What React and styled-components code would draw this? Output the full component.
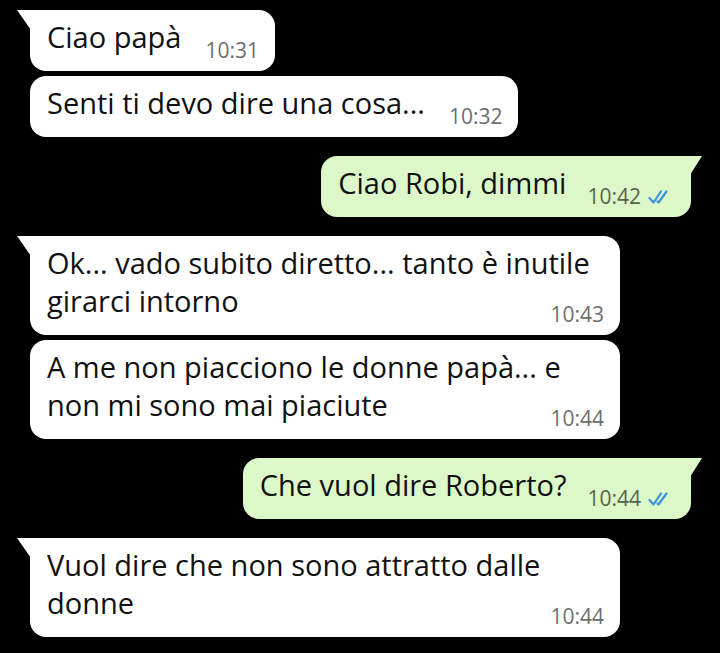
import React from "react";
import styled, { createGlobalStyle, css } from "styled-components";

const GlobalStyle = createGlobalStyle`
  html, body {
    margin: 0;
    padding: 0;
    background: #000;
  }
  body {
    font-family: "Open Sans", "Liberation Sans", Arial, sans-serif;
    -webkit-font-smoothing: antialiased;
  }
`;

const Chat = styled.div`
  display: flex;
  flex-direction: column;
  box-sizing: border-box;
  min-height: 653px;
  padding: 10px 29px 16px 30px;
  background: #000;
`;

const Bubble = styled.div`
  position: relative;
  display: flow-root;
  box-sizing: border-box;
  align-self: ${(p) => (p.$out ? "flex-end" : "flex-start")};
  width: ${(p) => (p.$wide ? "590px" : "auto")};
  margin-top: ${(p) => (p.$tail ? "19px" : "5px")};
  padding: 8px ${(p) => (p.$out ? "18px" : "16px")} 10px 17px;
  background: ${(p) => (p.$out ? "#dcf8c9" : "#ffffff")};
  border-radius: 16px;
  color: #111;
  font-size: 29px;
  line-height: 38px;
  letter-spacing: 0;

  &:first-child {
    margin-top: 0;
  }

  ${(p) =>
    p.$tail &&
    (p.$out
      ? css`
          border-top-right-radius: 0;
          &::before {
            content: "";
            position: absolute;
            top: 0;
            right: -11px;
            width: 12px;
            height: 19px;
            background: #dcf8c9;
            clip-path: polygon(0 0, 100% 0, 0 100%);
          }
        `
      : css`
          border-top-left-radius: 0;
          &::before {
            content: "";
            position: absolute;
            top: 0;
            left: -13px;
            width: 14px;
            height: 20px;
            background: #ffffff;
            clip-path: polygon(0 0, 100% 0, 100% 100%);
          }
        `)}
`;

const Text = styled.span`
  white-space: normal;
`;

const Meta = styled.span`
  float: right;
  display: inline-flex;
  align-items: center;
  gap: 7px;
  margin: 22px 0 0 ${(p) => (p.$out ? "21px" : "24px")};
  font-size: 21px;
  line-height: 21px;
  color: ${(p) => (p.$out ? "#56634f" : "#6e6e6e")};
`;

const Ticks = () => (
  <svg width="25" height="14" viewBox="0 0 25 14" fill="none">
    <path
      d="M1.5 8 L5.5 12.5 L13 1.5"
      stroke="#3a93e0"
      strokeWidth="2.2"
      strokeLinecap="round"
      strokeLinejoin="round"
    />
    <path
      d="M9.5 11.5 L10.5 12.5 L18.5 1.5"
      stroke="#3a93e0"
      strokeWidth="2.2"
      strokeLinecap="round"
      strokeLinejoin="round"
    />
  </svg>
);

const messages = [
  { out: false, tail: true, lines: ["Ciao papà"], time: "10:31" },
  { out: false, tail: false, lines: ["Senti ti devo dire una cosa..."], time: "10:32" },
  { out: true, tail: true, lines: ["Ciao Robi, dimmi"], time: "10:42" },
  {
    out: false,
    tail: true,
    wide: true,
    lines: ["Ok... vado subito diretto... tanto è inutile", "girarci intorno"],
    time: "10:43",
  },
  {
    out: false,
    tail: false,
    wide: true,
    lines: ["A me non piacciono le donne papà... e", "non mi sono mai piaciute"],
    time: "10:44",
  },
  { out: true, tail: true, lines: ["Che vuol dire Roberto?"], time: "10:44" },
  {
    out: false,
    tail: true,
    wide: true,
    lines: ["Vuol dire che non sono attratto dalle", "donne"],
    time: "10:44",
  },
];

export default function App() {
  return (
    <>
      <GlobalStyle />
      <Chat>
        {messages.map((m, i) => (
          <Bubble key={i} $out={m.out} $tail={m.tail} $wide={m.wide}>
            <Text>
              {m.lines.map((l, j) => (
                <React.Fragment key={j}>
                  {j > 0 && <br />}
                  {l}
                </React.Fragment>
              ))}
            </Text>
            <Meta $out={m.out}>
              {m.time}
              {m.out && <Ticks />}
            </Meta>
          </Bubble>
        ))}
      </Chat>
    </>
  );
}
